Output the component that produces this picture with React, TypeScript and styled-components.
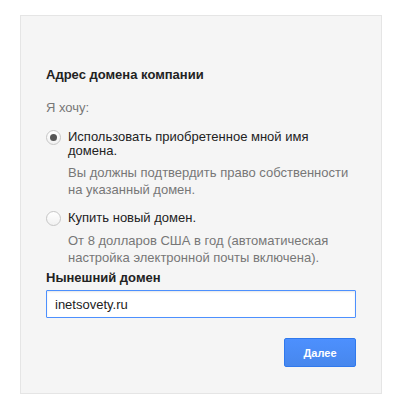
import { createGlobalStyle, styled } from 'styled-components'

const Global = createGlobalStyle`
	html, body {
		margin: 0;
		padding: 0;
		background: #fff;
	}
	body {
		font-family: 'Liberation Sans', Arial, sans-serif;
		font-size: 13px;
		color: #222;
	}
`

const Page = styled.div`
	padding: 15px 14px 18px 20px;
`

const Panel = styled.section`
	background: #f5f5f5;
	border: 1px solid #e5e5e5;
	padding: 50px 25px 26px 25px;
	display: flex;
	flex-direction: column;
`

const Title = styled.h2`
	margin: 0;
	font-size: 13px;
	font-weight: bold;
	color: #222;
	line-height: 17px;
`

const Lead = styled.div`
	margin-top: 16px;
	color: #777;
	line-height: 17px;
`

const Option = styled.label<{ $first?: boolean }>`
	display: flex;
	gap: 7px;
	margin-top: ${p => (p.$first ? '14px' : '13px')};
	line-height: 14px;
	color: #222;
`

const Radio = styled.span<{ $checked?: boolean }>`
	flex: none;
	width: 13px;
	height: 13px;
	margin-top: 0;
	border-radius: 50%;
	border: 1px solid #c6c6c6;
	background: linear-gradient(#fff, #f1f1f1);
	display: flex;
	align-items: center;
	justify-content: center;

	&::after {
		content: '';
		display: ${p => (p.$checked ? 'block' : 'none')};
		width: 7px;
		height: 7px;
		border-radius: 50%;
		background: #555;
	}
`

const Hint = styled.div`
	margin: 6px 0 0 22px;
	color: #777;
	line-height: 17px;
`

const FieldLabel = styled.div`
	margin-top: 3px;
	font-weight: bold;
	line-height: 17px;
`

const Input = styled.input`
	margin-top: 4px;
	box-sizing: border-box;
	width: 100%;
	height: 28px;
	border: 1px solid #4d90fe;
	border-radius: 1px;
	box-shadow: inset 0 1px 2px rgba(0, 0, 0, 0.1);
	padding: 0 8px;
	font: 13px 'Liberation Sans', Arial, sans-serif;
	color: #222;
	background: #fff;
	outline: none;
`

const Actions = styled.div`
	display: flex;
	justify-content: flex-end;
	margin-top: 20px;
`

const Button = styled.button`
	width: 72px;
	height: 29px;
	border: 1px solid #3079ed;
	border-radius: 2px;
	background: linear-gradient(#4d90fe, #4787ed);
	color: #fff;
	font: bold 11px 'Liberation Sans', Arial, sans-serif;
	padding: 0;
`

export default function App() {
	return (
		<Page>
			<Global />
			<Panel>
				<Title>Адрес домена компании</Title>
				<Lead>Я хочу:</Lead>
				<Option $first>
					<Radio $checked />
					<span>
						Использовать приобретенное мной имя
						<br />
						домена.
					</span>
				</Option>
				<Hint>
					Вы должны подтвердить право собственности
					<br />
					на указанный домен.
				</Hint>
				<Option>
					<Radio />
					<span>Купить новый домен.</span>
				</Option>
				<Hint>
					От 8 долларов США в год (автоматическая
					<br />
					настройка электронной почты включена).
				</Hint>
				<FieldLabel>Нынешний домен</FieldLabel>
				<Input defaultValue="inetsovety.ru" />
				<Actions>
					<Button>Далее</Button>
				</Actions>
			</Panel>
		</Page>
	)
}
